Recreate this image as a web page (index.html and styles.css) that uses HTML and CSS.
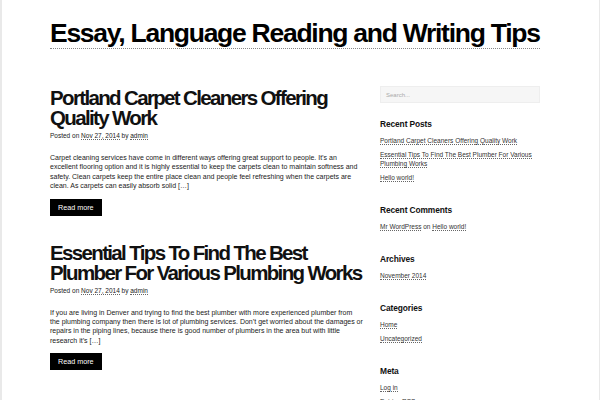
FILE: index.html
```html
<!DOCTYPE html>
<html lang="en">
<head>
<meta charset="utf-8">
<title>Essay, Language Reading and Writing Tips</title>
<link rel="stylesheet" href="styles.css">
</head>
<body>
<div class="page">
  <div class="wrap">
    <header class="site-header">
      <h1 class="site-title">Essay, Language Reading and Writing Tips</h1>
    </header>
    <div class="layout">
      <main class="content">
        <article class="post">
          <h2 class="post-title">Portland Carpet Cleaners Offering Quality Work</h2>
          <div class="post-meta">Posted on <a class="ul" href="#">Nov 27, 2014</a> by <a class="ul" href="#">admin</a></div>
          <p class="excerpt">Carpet cleaning services have come in different ways offering great support to people. It’s an excellent flooring option and it is highly essential to keep the carpets clean to maintain softness and safety. Clean carpets keep the entire place clean and people feel refreshing when the carpets are clean. As carpets can easily absorb solid […]</p>
          <a class="read-more" href="#">Read more</a>
        </article>
        <article class="post">
          <h2 class="post-title">Essential Tips To Find The Best Plumber For Various Plumbing Works</h2>
          <div class="post-meta">Posted on <a class="ul" href="#">Nov 27, 2014</a> by <a class="ul" href="#">admin</a></div>
          <p class="excerpt">If you are living in Denver and trying to find the best plumber with more experienced plumber from the plumbing company then there is lot of plumbing services. Don’t get worried about the damages or repairs in the piping lines, because there is good number of plumbers in the area but with little research it’s […]</p>
          <a class="read-more" href="#">Read more</a>
        </article>
      </main>
      <aside class="sidebar">
        <div class="search"><span class="placeholder">Search...</span></div>
        <section class="widget">
          <h3 class="widget-title">Recent Posts</h3>
          <ul class="widget-list">
            <li><a class="ul" href="#">Portland Carpet Cleaners Offering Quality Work</a></li>
            <li><a class="ul" href="#">Essential Tips To Find The Best Plumber For Various Plumbing Works</a></li>
            <li><a class="ul" href="#">Hello world!</a></li>
          </ul>
        </section>
        <section class="widget">
          <h3 class="widget-title">Recent Comments</h3>
          <ul class="widget-list">
            <li><a class="ul" href="#">Mr WordPress</a> on <a class="ul" href="#">Hello world!</a></li>
          </ul>
        </section>
        <section class="widget">
          <h3 class="widget-title">Archives</h3>
          <ul class="widget-list">
            <li><a class="ul" href="#">November 2014</a></li>
          </ul>
        </section>
        <section class="widget">
          <h3 class="widget-title">Categories</h3>
          <ul class="widget-list">
            <li><a class="ul" href="#">Home</a></li>
            <li><a class="ul" href="#">Uncategorized</a></li>
          </ul>
        </section>
        <section class="widget">
          <h3 class="widget-title">Meta</h3>
          <ul class="widget-list">
            <li><a class="ul" href="#">Log in</a></li>
            <li><a class="ul" href="#">Entries RSS</a></li>
          </ul>
        </section>
      </aside>
    </div>
  </div>
</div>
</body>
</html>
```
FILE: styles.css
```css
html, body {
  margin: 0;
  padding: 0;
}
body {
  background: #e9e9e9;
  font-family: "Liberation Sans", Arial, sans-serif;
  color: #333;
}
.page {
  background: #fff;
  margin: 0 1px 0 2px;
  height: 400px;
  overflow: hidden;
}
.wrap {
  width: 490px;
  margin-left: 48px;
}
.site-header {
  padding-top: 20px;
}
.site-title {
  margin: 0;
  padding-bottom: 1px;
  font-size: 26.5px;
  line-height: 27px;
  font-weight: bold;
  letter-spacing: -1.27px;
  color: #000;
  border-bottom: 1px dotted #888;
}
.layout {
  display: grid;
  grid-template-columns: 313px 160px;
  column-gap: 17px;
  margin-top: 37px;
}
.content {
  padding-top: 2px;
}
.post {
  margin-bottom: 27px;
}
.post-title {
  margin: 0;
  font-size: 20.5px;
  line-height: 20px;
  font-weight: bold;
  letter-spacing: -1.65px;
  color: #111;
}
.post-meta {
  margin-top: 3px;
  font-size: 6.5px;
  line-height: 9px;
  color: #222;
}
.ul {
  color: #333;
  text-decoration: none;
  border-bottom: 1px dotted #666;
}
.post-meta .ul {
  color: #222;
}
.excerpt {
  margin: 13px 0 0;
  font-size: 7px;
  line-height: 9.4px;
  color: #1a1a1a;
}
.read-more {
  display: inline-block;
  margin-top: 8px;
  padding: 0 8px;
  background: #000;
  color: #fff;
  font-size: 7.2px;
  line-height: 17px;
  text-decoration: none;
}
.search {
  height: 15px;
  border: 1px solid #eee;
  background: #f6f6f6;
  display: flex;
  align-items: center;
  padding-left: 5px;
}
.placeholder {
  font-size: 6px;
  color: #aaa;
}
.widget {
  margin-top: 16px;
}
.widget + .widget {
  margin-top: 23px;
}
.widget-title {
  margin: 0 0 7px;
  font-size: 8.4px;
  line-height: 10px;
  font-weight: bold;
  letter-spacing: -0.1px;
  color: #111;
}
.widget-list {
  list-style: none;
  margin: 0;
  padding: 0;
  font-size: 6.5px;
  line-height: 9px;
}
.widget-list li {
  margin-bottom: 5px;
}
```
